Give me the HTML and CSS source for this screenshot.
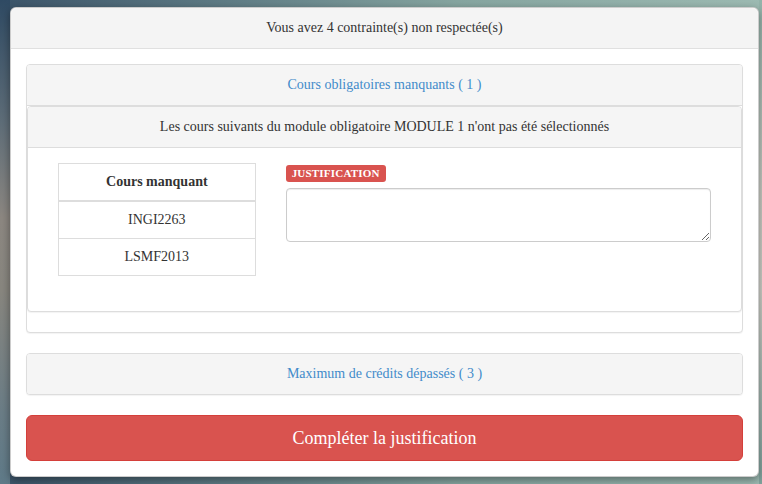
FILE: index.html
```html
<!DOCTYPE html>
<html lang="fr">
<head>
<meta charset="utf-8">
<title>Contraintes</title>
<link rel="stylesheet" href="styles.css">
</head>
<body>
<div class="modal">
  <div class="modal-header">Vous avez 4 contrainte(s) non respectée(s)</div>
  <div class="modal-body">
    <div class="panel">
      <div class="panel-heading link">Cours obligatoires manquants ( 1 )</div>
      <div class="panel-body flush">
        <div class="panel inner">
          <div class="panel-heading">Les cours suivants du module obligatoire MODULE 1 n'ont pas été sélectionnés</div>
          <div class="panel-body cols">
            <div class="col">
              <table class="table">
                <thead><tr><th>Cours manquant</th></tr></thead>
                <tbody>
                  <tr><td>INGI2263</td></tr>
                  <tr><td>LSMF2013</td></tr>
                </tbody>
              </table>
            </div>
            <div class="col">
              <span class="label">JUSTIFICATION</span>
              <textarea class="field"></textarea>
            </div>
          </div>
        </div>
      </div>
    </div>
    <div class="panel">
      <div class="panel-heading link">Maximum de crédits dépassés ( 3 )</div>
    </div>
    <button class="btn">Compléter la justification</button>
  </div>
</div>
</body>
</html>
```
FILE: styles.css
```css
* { box-sizing: border-box; }
html, body { height: 100%; }
body {
  margin: 0;
  font-family: "Liberation Serif", "Times New Roman", serif;
  font-size: 14px;
  line-height: 20px;
  color: #333;
  background:
    linear-gradient(to bottom, #2f4a63 0%, #5e6d78 25%, #8c8781 45%, #88867f 60%, #6b7d86 85%, #5f7a88 100%) left top / 10px 100% no-repeat,
    linear-gradient(to bottom, #93b3aa 0%, #c9cbc3 40%, #cfd0c8 60%, #7fa29c 100%) right top / 3px 100% no-repeat,
    linear-gradient(to right, #3b5469 0%, #5f7c85 30%, #86a5a0 60%, #9cbab2 100%);
  overflow: hidden;
}
.modal {
  margin: 7px 3px 0 10px;
  background: #fff;
  border: 1px solid rgba(0,0,0,.2);
  border-radius: 6px;
  box-shadow: 0 3px 9px rgba(0,0,0,.4);
}
.modal-header {
  background: #f4f4f4;
  border-bottom: 1px solid #e0e0e0;
  border-radius: 6px 6px 0 0;
  padding: 10px 15px;
  text-align: center;
}
.modal-body { padding: 15px; }
.panel {
  border: 1px solid #ddd;
  border-radius: 4px;
  margin-bottom: 20px;
  background: #fff;
  box-shadow: 0 1px 1px rgba(0,0,0,.05);
}
.panel-heading {
  background: #f5f5f5;
  border-bottom: 1px solid #ddd;
  border-radius: 3px 3px 0 0;
  padding: 10px 15px;
  text-align: center;
}
.panel > .panel-heading:last-child { border-bottom: 0; border-radius: 3px; }
.panel-heading.link { color: #428bca; }
.panel-body.flush { padding: 0; }
.panel.inner { margin-left: 0; margin-right: 0; }
.cols {
  padding: 15px;
  display: grid;
  grid-template-columns: 1fr 2fr;
}
.col { padding: 0 15px; }
.table {
  width: 100%;
  border-collapse: collapse;
  border: 1px solid #ddd;
  margin-bottom: 20px;
}
.table th, .table td {
  padding: 8px;
  line-height: 20px;
  text-align: center;
  border: 1px solid #ddd;
}
.table th { border-bottom-width: 2px; font-weight: bold; }
.label {
  display: block;
  width: fit-content;
  margin-top: 2px;
  margin-bottom: 6px;
  padding: 3px 6px 3px;
  font-size: 11px;
  font-weight: bold;
  line-height: 11px;
  color: #fff;
  background: #d9534f;
  border-radius: 3px;
  letter-spacing: .2px;
}
.field {
  display: block;
  width: 100%;
  height: 54px;
  border: 1px solid #ccc;
  border-radius: 4px;
  box-shadow: inset 0 1px 1px rgba(0,0,0,.075);
  font-family: inherit;
  font-size: 14px;
  padding: 6px 12px;
}
.btn {
  display: block;
  width: 100%;
  margin-top: 2px;
  padding: 10px 16px;
  font-family: inherit;
  font-size: 18px;
  line-height: 24px;
  color: #fff;
  background: #d9534f;
  border: 1px solid #d43f3a;
  border-radius: 6px;
}
```
